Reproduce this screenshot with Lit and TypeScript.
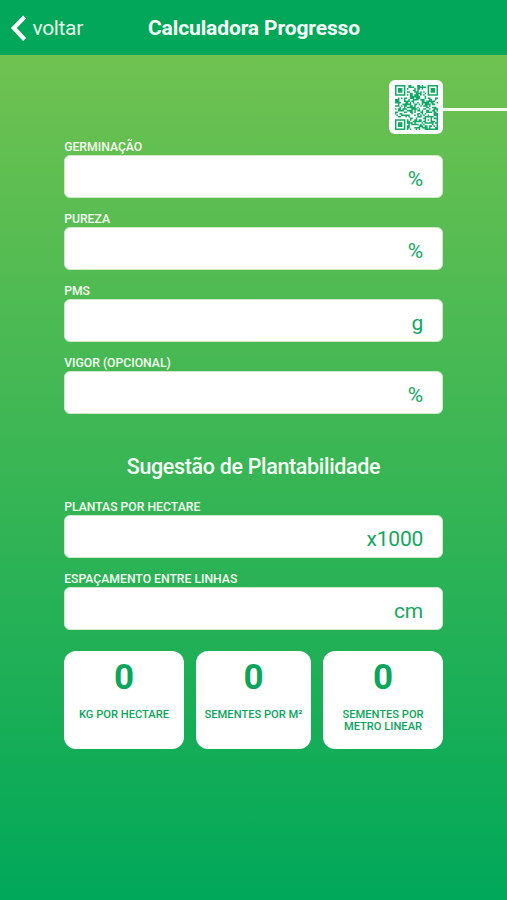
import { LitElement, html, css, svg } from "lit";
import { customElement, property } from "lit/decorators.js";

const QR_SIZE = 29;

// Builds the module grid of the badge as one path of unit squares.
function qrPath(): string {
  const finder = (x: number, y: number): boolean => {
    const ring = Math.max(Math.abs(x - 3), Math.abs(y - 3));
    return ring === 3 || ring <= 1;
  };
  let seed = 4177;
  let d = "";
  for (let y = 0; y < QR_SIZE; y++) {
    for (let x = 0; x < QR_SIZE; x++) {
      seed = (seed * 1103515245 + 12345) % 2147483648;
      let on = ((seed >> 16) & 255) < 136;
      if (x < 8 && y < 8) on = x < 7 && y < 7 && finder(x, y);
      else if (x > 20 && y < 8) on = x > 21 && y < 7 && finder(x - 22, y);
      else if (x < 8 && y > 20) on = x < 7 && y > 21 && finder(x, y - 22);
      else if (x >= 20 && x <= 24 && y >= 20 && y <= 24) {
        const ring = Math.max(Math.abs(x - 22), Math.abs(y - 22));
        on = ring !== 1;
      }
      if (on) d += `M${x} ${y}h1v1h-1z`;
    }
  }
  return d;
}

@customElement("calc-field")
export class CalcField extends LitElement {
  @property() label = "";
  @property() unit = "";

  static styles = css`
    :host { display: block; height: 72px; }
    .label {
      height: 15px; font-size: 12.2px; line-height: 15px; font-weight: 500;
      color: #f4fff0; white-space: nowrap; padding-left: 0.2px;
    }
    .box {
      box-sizing: border-box; height: 43px; padding: 4px 19px 0 0;
      display: flex; align-items: center; justify-content: flex-end;
      background: #fff; border: 1px solid #cfe9c9; border-radius: 6px;
      color: #10a860; font-size: 21px; line-height: 24px; letter-spacing: -0.25px;
    }
  `;

  render() {
    return html`<div class="label">${this.label}</div>
      <div class="box"><span>${this.unit}</span></div>`;
  }
}

@customElement("result-card")
export class ResultCard extends LitElement {
  @property() value = "0";
  @property({ type: Array }) lines: string[] = [];

  static styles = css`
    :host {
      display: block; box-sizing: border-box; height: 98px; padding-top: 7px;
      background: #fff; border-radius: 12px; text-align: center; color: #0aa65c;
    }
    .value { font-size: 35px; line-height: 40px; font-weight: 700; }
    .caption {
      margin-top: 11px; font-size: 11.15px; line-height: 12px; font-weight: 500;
      white-space: nowrap;
    }
  `;

  render() {
    return html`<div class="value">${this.value}</div>
      <div class="caption">${this.lines.map((l) => html`<div>${l}</div>`)}</div>`;
  }
}

@customElement("app-root")
export class AppRoot extends LitElement {
  static styles = css`
    :host {
      display: flex; flex-direction: column; height: 900px; overflow: hidden;
      font-family: Roboto, sans-serif; background: #00a859;
    }
    header {
      display: grid; grid-template-columns: 148px 1fr; align-items: center;
      height: 55px; flex: none; color: #f6fff9; background: #02a75a;
    }
    .back { display: flex; align-items: center; padding-left: 10px; }
    .back svg { display: block; }
    .back span {
      margin-left: 5.5px; font-size: 21px; line-height: 24px;
      letter-spacing: -0.35px; color: #e2f8e9;
    }
    .title {
      font-size: 21px; line-height: 24px; font-weight: 700;
      letter-spacing: -0.12px; white-space: nowrap;
    }
    main {
      flex: 1; box-sizing: border-box; padding: 25px 64px 0;
      background: linear-gradient(#6fc250 0%, #00a859 100%);
    }
    .scan {
      display: flex; align-items: center; justify-content: flex-end;
      height: 54px; margin-right: -64px;
    }
    .qr {
      box-sizing: border-box; width: 54px; height: 54px; padding: 5px 5px 4px 6px;
      background: #fff; border-radius: 6px;
    }
    .qr svg { display: block; }
    .wire { width: 64px; height: 3px; margin-top: 5px; background: #f3faee; }
    .fields { padding-top: 6px; }
    h2 {
      margin: 0; height: 72px; box-sizing: border-box; padding-top: 26px;
      font-size: 21.5px; line-height: 26px; font-weight: 500; color: #f4fff6;
      letter-spacing: -0.34px; text-align: center;
    }
    .results {
      display: grid; grid-template-columns: 120px 115px 120px; gap: 12px;
      margin-top: 7px;
    }
  `;

  render() {
    return html`
      <header>
        <div class="back">
          <svg width="17" height="28" viewBox="0 0 17 28">
            <path d="M14.6 3 3.8 14l10.8 11.5" fill="none" stroke="#fff" stroke-width="4.2" />
          </svg>
          <span>voltar</span>
        </div>
        <div class="title">Calculadora Progresso</div>
      </header>
      <main>
        <div class="scan">
          <div class="qr">
            <svg width="43" height="45" viewBox="0 0 29 29" preserveAspectRatio="none">
              ${svg`<path d=${qrPath()} fill="#12a866" />`}
            </svg>
          </div>
          <div class="wire"></div>
        </div>
        <div class="fields">
          <calc-field label="GERMINAÇÃO" unit="%"></calc-field>
          <calc-field label="PUREZA" unit="%"></calc-field>
          <calc-field label="PMS" unit="g"></calc-field>
          <calc-field label="VIGOR (OPCIONAL)" unit="%"></calc-field>
          <h2>Sugestão de Plantabilidade</h2>
          <calc-field label="PLANTAS POR HECTARE" unit="x1000"></calc-field>
          <calc-field label="ESPAÇAMENTO ENTRE LINHAS" unit="cm"></calc-field>
        </div>
        <div class="results">
          <result-card .lines=${["KG POR HECTARE"]}></result-card>
          <result-card .lines=${["SEMENTES POR M²"]}></result-card>
          <result-card .lines=${["SEMENTES POR", "METRO LINEAR"]}></result-card>
        </div>
      </main>
    `;
  }
}
